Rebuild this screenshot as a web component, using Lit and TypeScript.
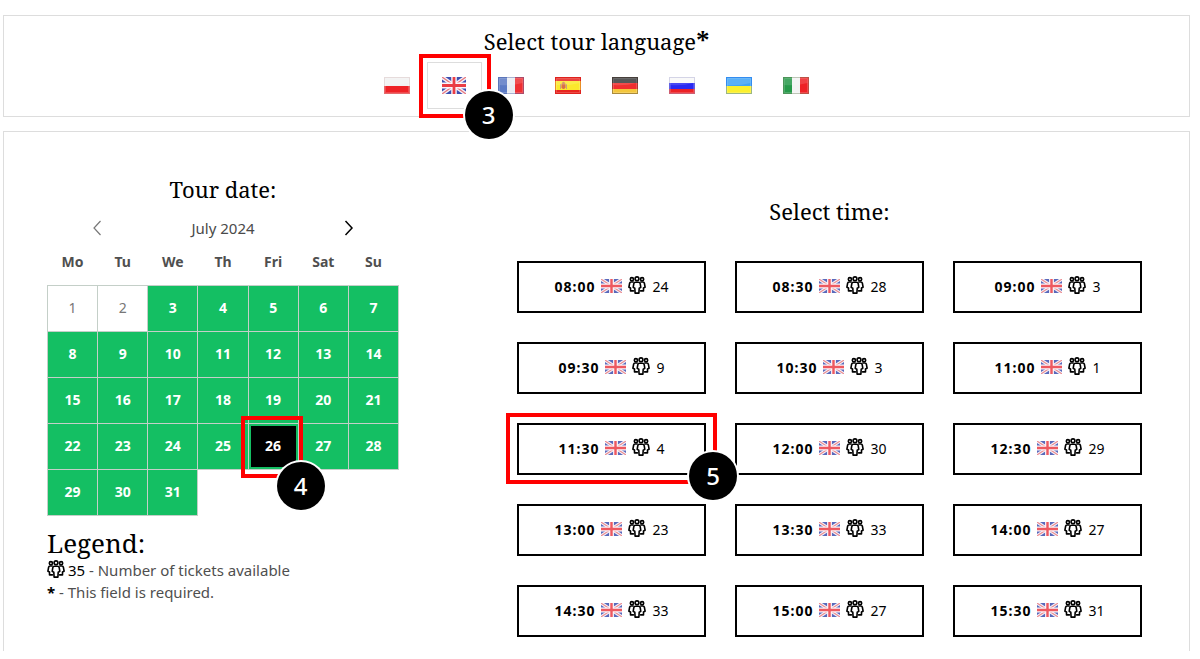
import { LitElement, html, css, svg } from "lit";
import { customElement, property, state } from "lit/decorators.js";

const flagArt: Record<string, unknown> = {
  pl: svg`<rect width="26" height="9" fill="#f1f1f1"/><rect y="9" width="26" height="8" fill="#ee2226"/>`,
  gb: svg`<rect width="26" height="17" fill="#3d4fb0"/>
    <path d="M0 0L26 17M26 0L0 17" stroke="#f4f1f8" stroke-width="4"/>
    <path d="M0 0L26 17M26 0L0 17" stroke="#e8767c" stroke-width="1.3"/>
    <path d="M13 0V17M0 8.500H26" stroke="#fbf5fa" stroke-width="6"/>
    <path d="M13 0V17M0 8.500H26" stroke="#ea3d45" stroke-width="3"/>`,
  fr: svg`<rect width="9" height="17" fill="#5c7ac4"/><rect x="9" width="8" height="17" fill="#e9ecf2"/><rect x="17" width="9" height="17" fill="#ee2f33"/>`,
  es: svg`<rect width="26" height="17" fill="#e8251f"/><rect y="4" width="26" height="9" fill="#fbe92c"/>
    <path d="M5 7h1v5h-1zM11 7h1v5h-1z" fill="#c9a27a"/><path d="M6.500 6.500h4v4q-2 3-4 0z" fill="#d96d4b"/><circle cx="8.500" cy="6" r="1.300" fill="#c98a55"/>`,
  de: svg`<rect width="26" height="6" fill="#3c3c3c"/><rect y="6" width="26" height="6" fill="#f02f2f"/><rect y="12" width="26" height="5" fill="#f3c63c"/>`,
  ru: svg`<rect width="26" height="6" fill="#f8f8f8"/><rect y="6" width="26" height="6" fill="#2a2af2"/><rect y="12" width="26" height="5" fill="#ec2226"/>`,
  ua: svg`<rect width="26" height="9" fill="#3fa3f6"/><rect y="9" width="26" height="8" fill="#fbf02e"/>`,
  it: svg`<rect width="9" height="17" fill="#27994a"/><rect x="9" width="8" height="17" fill="#f3f3f3"/><rect x="17" width="9" height="17" fill="#ee2226"/>`,
};

const edge: Record<string, string> = {
  pl: "#d9c0c0", gb: "none", fr: "#5a6fae", es: "#d31f1c", de: "#55423a", ru: "#a8a8d0", ua: "#2572e8", it: "#7c8f6c",
};

@customElement("flag-icon")
class FlagIcon extends LitElement {
  @property() code = "gb";
  static styles = css`
    :host { display: block; width: 26px; height: 17px; }
    svg { display: block; width: 100%; height: 100%; }
  `;
  render() {
    return html`<svg viewBox="0 0 26 17" preserveAspectRatio="none" aria-hidden="true">
      ${flagArt[this.code]}
      ${this.code === "gb" ? null : svg`
        <path d="M1.500 1.500H24.500V6Q13 9 1.500 8z" fill="#fff" opacity=".14"/>
        <rect x=".5" y=".5" width="25" height="16" fill="none" stroke=${edge[this.code]} opacity=".45"/>
        <rect x="1.500" y="1.500" width="23" height="14" fill="none" stroke="#fff" opacity=".18"/>`}
    </svg>`;
  }
}

@customElement("people-icon")
class PeopleIcon extends LitElement {
  static styles = css`
    :host { display: inline-block; width: 18px; height: 18px; }
    svg { display: block; width: 100%; height: 100%; }
  `;
  render() {
    return html`<svg viewBox="0 0 18 18" fill="none" stroke="#000" stroke-width="1.600" stroke-linejoin="round" stroke-linecap="round" aria-hidden="true">
      <circle cx="3.900" cy="3.200" r="1.600"/><circle cx="14.100" cy="3.200" r="1.600"/>
      <path d="M5.200 6H3.100Q1.900 6 1.600 7.300L.9 11.200L2.500 12V14.900H5.400"/>
      <path d="M12.800 6H14.900Q16.100 6 16.400 7.300L17.100 11.200L15.500 12V14.900H12.600"/>
      <circle cx="9" cy="2.800" r="1.900"/>
      <path d="M7.400 6.300H10.600Q11.900 6.300 12.200 7.600L12.800 11.400L11.200 12.300L10.900 17.100H7.100L6.800 12.300L5.200 11.400L5.800 7.600Q6.100 6.300 7.400 6.300z" fill="#fff"/>
    </svg>`;
  }
}

const languages = [
  ["pl", "Polish"], ["gb", "English"], ["fr", "French"], ["es", "Spanish"],
  ["de", "German"], ["ru", "Russian"], ["ua", "Ukrainian"], ["it", "Italian"],
];
const weekdays = ["Mo", "Tu", "We", "Th", "Fri", "Sat", "Su"];
const slots: [string, number][] = [
  ["08:00", 24], ["08:30", 28], ["09:00", 3],
  ["09:30", 9], ["10:30", 3], ["11:00", 1],
  ["11:30", 4], ["12:00", 30], ["12:30", 29],
  ["13:00", 23], ["13:30", 33], ["14:00", 27],
  ["14:30", 33], ["15:00", 27], ["15:30", 31],
];

@customElement("app-root")
class AppRoot extends LitElement {
  @state() language = "gb";
  @state() day = 26;
  @state() time = "11:30";

  static styles = css`
    * { box-sizing: border-box; }
    :host {
      display: block;
      padding: 15px 10px 0 3px;
      background: #fff;
      color: #000;
      font: 14px/22px "Noto Sans", sans-serif;
    }
    button { font: inherit; color: inherit; background: none; border: 0; padding: 0; margin: 0; cursor: pointer; }
    h2, h3 { margin: 0; font-family: "Noto Serif", "Droid Serif", "DejaVu Serif Condensed", "Liberation Serif", serif; font-weight: 400; font-size: 22px; line-height: 30px; text-align: center; }
    .panel { border: 1px solid #ddd; }
    .languages { padding: 10px 0 7px; margin-bottom: 14px; }
    .required { font-weight: 700; font-size: 26px; line-height: 22px; }
    .flags { display: flex; justify-content: center; gap: 2px; margin-top: 6px; }
    .flag { position: relative; display: grid; place-items: center; width: 55px; height: 47px; border: 1px solid transparent; }
    .flag.selected { border-color: #ddd; }
    .flag.selected flag-icon { width: 24px; }
    .booking { display: flex; align-items: flex-start; gap: 118px; padding: 42px 47px 14px 43px; border-bottom: 0; }
    .date { flex: none; width: 352px; }
    .times { flex: 1; padding-top: 22px; }
    .month { display: flex; align-items: center; justify-content: space-between; padding: 0 42px; margin-top: 13px; color: #4a4a4a; font-size: 15px; }
    .arrow { display: grid; place-items: center; width: 16px; height: 22px; }
    .arrow svg { width: 10px; height: 16px; fill: none; stroke: #000; stroke-width: 1.500; }
    .arrow:disabled svg { stroke: #777; stroke-width: 1.200; }
    table { width: 352px; table-layout: fixed; border-collapse: collapse; }
    th { height: 46px; padding: 0; font-weight: 700; color: #4f4f4f; }
    td { position: relative; height: 46px; padding: 0; border: 1px solid #c4cfc8; text-align: center; }
    td.blank { border: 0; }
    .day { display: block; width: 100%; height: 45px; background: #14bf63; color: #fff; font-weight: 700; }
    .day:disabled { background: #fff; color: #777; font-weight: 400; cursor: default; }
    .day.selected { background: #000; border: 2px solid #14bf63; }
    .legend { margin-top: 11px; color: #4f4f4f; font-size: 15px; }
    .legend h3 { font-size: 26px; line-height: 32px; text-align: left; color: #000; }
    .legend p { margin: 0; }
    .legend b, .legend .sample { color: #000; }
    .legend people-icon { vertical-align: -2px; margin-right: -1px; }
    .slots { display: grid; grid-template-columns: repeat(3, 1fr); gap: 29px; margin-top: 35px; }
    .slot { position: relative; display: flex; align-items: center; justify-content: center; gap: 6px; height: 52px; border: 2px solid #000; }
    .clock { font-weight: 700; letter-spacing: 1px; }
    .slot flag-icon { width: 21px; height: 14px; margin-bottom: 2px; opacity: .85; }
    .slot people-icon { margin-bottom: 4px; }
    .mark { position: absolute; z-index: 2; border: 4px solid #f00; pointer-events: none; }
    .badge { position: absolute; display: grid; place-items: center; width: 48px; height: 48px; border-radius: 50%; background: #000; box-shadow: 0 0 0 2px #fff; color: #fff; font-size: 24px; line-height: 32px; font-weight: 500; }
    .mark-language { inset: -9px -10px -10px -9px; }
    .mark-language .badge { right: -26px; bottom: -25px; }
    .mark-day { inset: -8px -5px -9px -8px; }
    .mark-day .badge { right: -26px; bottom: -36px; }
    .mark-time { inset: -12px -13px -11px; }
    .mark-time .badge { right: -24px; bottom: -20px; }
  `;

  mark(kind: string, step: number) {
    return html`<span class="mark mark-${kind}"><span class="badge">${step}</span></span>`;
  }

  renderDay(n: number) {
    if (n > 31) return html`<td class="blank"></td>`;
    const chosen = n === this.day;
    return html`<td>
      <button class="day ${chosen ? "selected" : ""}" ?disabled=${n < 3} @click=${() => (this.day = n)}>${n}</button>
      ${chosen ? this.mark("day", 4) : null}
    </td>`;
  }

  render() {
    return html`
      <section class="panel languages">
        <h2>Select tour language<span class="required">*</span></h2>
        <div class="flags">
          ${languages.map(([code, name]) => html`
            <button class="flag ${code === this.language ? "selected" : ""}" aria-label=${name} @click=${() => (this.language = code)}>
              <flag-icon .code=${code}></flag-icon>
              ${code === this.language ? this.mark("language", 3) : null}
            </button>`)}
        </div>
      </section>
      <section class="panel booking">
        <div class="date">
          <h2>Tour date:</h2>
          <div class="month">
            <button class="arrow" aria-label="Previous month" disabled><svg viewBox="0 0 10 16"><path d="M8.500 1L2 8L8.500 15"/></svg></button>
            <span>July 2024</span>
            <button class="arrow" aria-label="Next month"><svg viewBox="0 0 10 16"><path d="M1.500 1L8 8L1.500 15"/></svg></button>
          </div>
          <table>
            <thead><tr>${weekdays.map((d) => html`<th scope="col">${d}</th>`)}</tr></thead>
            <tbody>
              ${[0, 1, 2, 3, 4].map((w) => html`<tr>${weekdays.map((_, i) => this.renderDay(w * 7 + i + 1))}</tr>`)}
            </tbody>
          </table>
          <div class="legend">
            <h3>Legend:</h3>
            <p><people-icon></people-icon> <span class="sample">35</span> - Number of tickets available</p>
            <p><b>*</b> - This field is required.</p>
          </div>
        </div>
        <div class="times">
          <h2>Select time:</h2>
          <div class="slots">
            ${slots.map(([time, left]) => html`
              <button class="slot" @click=${() => (this.time = time)}>
                <span class="clock">${time}</span>
                <flag-icon code="gb"></flag-icon>
                <people-icon></people-icon>
                <span>${left}</span>
                ${time === this.time ? this.mark("time", 5) : null}
              </button>`)}
          </div>
        </div>
      </section>
    `;
  }
}
